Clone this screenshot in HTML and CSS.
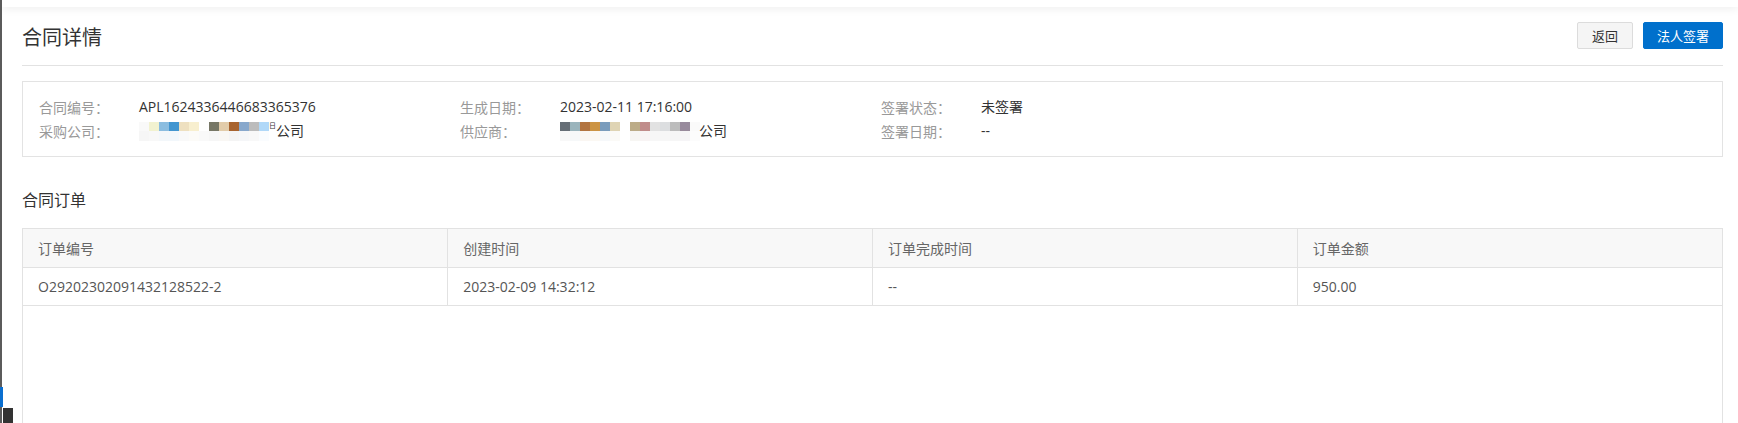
FILE: index.html
```html
<!DOCTYPE html>
<html lang="zh-CN">
<head>
<meta charset="utf-8">
<title>合同详情</title>
<link rel="stylesheet" href="styles.css">
</head>
<body>
<div class="app">
  <div class="side-edge">
    <span class="side-active"></span>
    <span class="side-toggle"></span>
  </div>
  <main class="main">
    <div class="topbar"></div>
    <div class="content">
      <header class="page-head">
        <h1 class="page-title">合同详情</h1>
        <div class="actions">
          <button class="btn btn-default">返回</button>
          <button class="btn btn-primary">法人签署</button>
        </div>
      </header>

      <section class="info-box">
        <div class="info-item"><span class="info-label">合同编号：</span><span class="info-value">APL1624336446683365376</span></div>
        <div class="info-item"><span class="info-label">生成日期：</span><span class="info-value">2023-02-11 17:16:00</span></div>
        <div class="info-item"><span class="info-label">签署状态：</span><span class="info-value">未签署</span></div>
        <div class="info-item"><span class="info-label">采购公司：</span><span class="info-value"><span class="mosaic mosaic-buyer"><span class="mosaic-top"></span><span class="mosaic-bottom"></span></span><span class="partial">日</span>公司</span></div>
        <div class="info-item"><span class="info-label">供应商：</span><span class="info-value"><span class="mosaic mosaic-supplier"><span class="mosaic-top"></span><span class="mosaic-bottom"></span></span>公司</span></div>
        <div class="info-item"><span class="info-label">签署日期：</span><span class="info-value">--</span></div>
      </section>

      <h2 class="section-title">合同订单</h2>

      <div class="table-wrap">
        <table class="order-table">
          <thead>
            <tr><th>订单编号</th><th>创建时间</th><th>订单完成时间</th><th>订单金额</th></tr>
          </thead>
          <tbody>
            <tr><td>O29202302091432128522-2</td><td>2023-02-09 14:32:12</td><td>--</td><td>950.00</td></tr>
          </tbody>
        </table>
      </div>
    </div>
  </main>
</div>
</body>
</html>
```
FILE: styles.css
```css
* { box-sizing: border-box; }
html, body { margin: 0; padding: 0; height: 100%; overflow: hidden; background: #fff; }
body {
  font-family: "Open Sans", "Noto Sans CJK SC", sans-serif;
  color: #333;
  font-size: 14px;
}
.app { display: flex; height: 100vh; }

.side-edge {
  width: 2px;
  flex: none;
  background: #5b5b5b;
  position: relative;
  z-index: 3;
}
.side-active {
  position: absolute;
  left: 0; bottom: 16px;
  width: 3px; height: 20px;
  background: #0a6fd0;
}
.side-toggle {
  position: absolute;
  left: 3px; bottom: 0;
  width: 10px; height: 15px;
  background: #333;
}

.main { flex: 1; display: flex; flex-direction: column; min-width: 0; }
.topbar {
  height: 7px;
  flex: none;
  background: #fff;
  box-shadow: 0 1px 10px rgba(0,0,0,0.09);
  position: relative;
  z-index: 2;
}
.content {
  flex: 1;
  display: flex;
  flex-direction: column;
  padding: 0 15px 0 20px;
  min-height: 0;
}

.page-head {
  display: flex;
  justify-content: space-between;
  align-items: flex-start;
  height: 59px;
  padding: 15px 0 16px;
  border-bottom: 1px solid #e2e2e2;
}
.page-title {
  margin: 0;
  padding-top: 2px;
  font-size: 20px;
  line-height: 25px;
  font-weight: 400;
  color: #333;
  font-family: "Noto Sans CJK SC", sans-serif;
}
.actions { display: flex; gap: 10px; }
.btn {
  height: 27px;
  padding: 0;
  font-family: "Noto Sans CJK SC", sans-serif;
  font-size: 13px;
  line-height: 25px;
  border-radius: 2px;
  cursor: pointer;
}
.btn-default {
  width: 56px;
  background: #f5f5f5;
  border: 1px solid #dcdcdc;
  color: #333;
}
.btn-primary {
  width: 80px;
  background: #0070cc;
  border: 1px solid #0070cc;
  color: #fff;
}

.info-box {
  margin-top: 15px;
  border: 1px solid #e3e3e3;
  padding: 13px 16px;
  display: grid;
  grid-template-columns: 421px 421px 1fr;
  line-height: 24px;
}
.info-item { display: flex; align-items: center; height: 24px; }
.info-label {
  width: 100px;
  flex: none;
  color: #999;
  font-family: "Noto Sans CJK SC", sans-serif;
}
.info-value { color: #333; display: flex; align-items: center; }

.mosaic { display: flex; flex-direction: column; height: 19px; }
.mosaic-top { height: 9px; }
.mosaic-bottom { height: 10px; }
.mosaic-buyer { width: 130px; }
.mosaic-buyer .mosaic-top {
  background: linear-gradient(to right,
    #f9f9f9 0 10px, #f2f2d0 10px 20px, #8bbde0 20px 30px, #4396d0 30px 40px,
    #eee0c0 40px 50px, #f8efcf 50px 60px, #ffffff 60px 70px, #777766 70px 80px,
    #e2ccaa 80px 90px, #a86430 90px 100px, #88a8cc 100px 110px, #bcbcbc 110px 120px,
    #b0d8f8 120px 130px);
}
.mosaic-buyer .mosaic-bottom {
  background: linear-gradient(to right,
    #f6f6f6 0 10px, #f8f8f8 10px 20px, #f3f7fa 20px 30px, #f2f7fb 30px 40px,
    #f9f9f9 40px 50px, #fcfbf8 50px 60px, #f9f9f9 60px 70px, #f6f6f6 70px 80px,
    #f9f7f4 80px 90px, #f4f4f4 90px 100px, #f5f6f8 100px 110px, #f8f8f8 110px 120px,
    #fafcfe 120px 130px);
}
.mosaic-supplier { width: 140px; margin-right: -1px; }
.mosaic-supplier .mosaic-top {
  background: linear-gradient(to right,
    #666e76 0 10px, #9ab4bc 10px 20px, #b27440 20px 30px, #cc9444 30px 40px,
    #7a9cbc 40px 50px, #dfd4b4 50px 60px, #ffffff 60px 70px, #bcac88 70px 80px,
    #c08c8a 80px 90px, #e2e2e2 90px 100px, #dcdee0 100px 110px, #bcbcbc 110px 120px,
    #988a9c 120px 130px, #fafafa 130px 140px);
}
.mosaic-supplier .mosaic-bottom {
  background: linear-gradient(to right,
    #f8f8f8 0 10px, #f6f8f9 10px 20px, #faf6f2 20px 30px, #fbf8f3 30px 40px,
    #f6f8fa 40px 50px, #fbfaf7 50px 60px, #ffffff 60px 70px, #f7f6f3 70px 80px,
    #f8f4f4 80px 90px, #f7f7f7 90px 100px, #f7f7f7 100px 110px, #f6f6f6 110px 120px,
    #f6f5f7 120px 130px, #fcfcfc 130px 140px);
}
.partial {
  display: inline-block;
  font-size: 7px;
  line-height: 8px;
  align-self: flex-start;
  margin: 3px 0 0 0;
  color: #333;
}

.section-title {
  margin: 31px 0 18px;
  font-size: 16px;
  line-height: 22px;
  font-weight: 400;
  color: #333;
  font-family: "Noto Sans CJK SC", sans-serif;
}

.table-wrap {
  flex: 1;
  border: 1px solid #e2e2e2;
  border-bottom: none;
}
.order-table {
  width: 100%;
  border-collapse: collapse;
  table-layout: fixed;
}
.order-table th,
.order-table td {
  height: 38px;
  padding: 0 15px;
  text-align: left;
  font-size: 14px;
  font-weight: 400;
  border-right: 1px solid #e2e2e2;
  border-bottom: 1px solid #e2e2e2;
}
.order-table th:last-child,
.order-table td:last-child { border-right: none; }
.order-table th {
  background: #f8f8f8;
  color: #666;
  font-family: "Noto Sans CJK SC", sans-serif;
}
.order-table td { color: #555; }
```
